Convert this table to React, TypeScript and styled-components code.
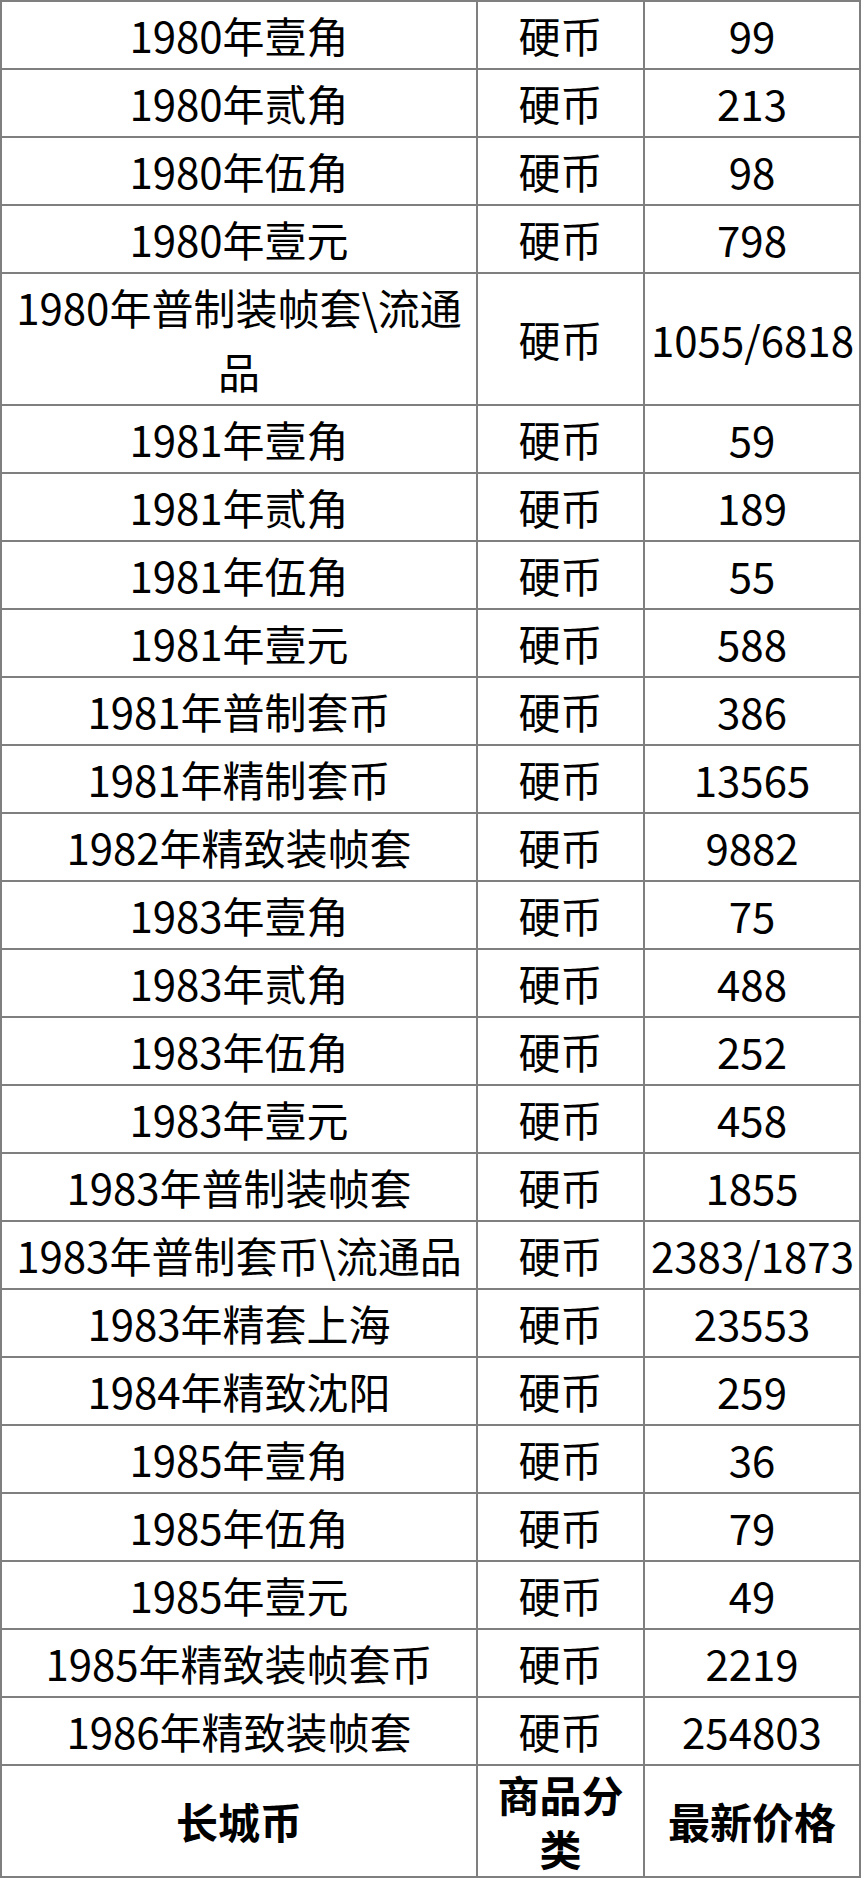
import React from "react";
import styled, { createGlobalStyle } from "styled-components";

const GlobalStyle = createGlobalStyle`
  html, body {
    margin: 0;
    padding: 0;
    background: #ffffff;
  }
  body {
    font-family: "Noto Sans CJK SC", "Noto Sans", sans-serif;
    color: #000000;
  }
`;

type Coin = { name: string; kind: string; price: string };

const coins: Coin[] = [
  { name: "1980年壹角", kind: "硬币", price: "99" },
  { name: "1980年贰角", kind: "硬币", price: "213" },
  { name: "1980年伍角", kind: "硬币", price: "98" },
  { name: "1980年壹元", kind: "硬币", price: "798" },
  { name: "1980年普制装帧套\\流通品", kind: "硬币", price: "1055/6818" },
  { name: "1981年壹角", kind: "硬币", price: "59" },
  { name: "1981年贰角", kind: "硬币", price: "189" },
  { name: "1981年伍角", kind: "硬币", price: "55" },
  { name: "1981年壹元", kind: "硬币", price: "588" },
  { name: "1981年普制套币", kind: "硬币", price: "386" },
  { name: "1981年精制套币", kind: "硬币", price: "13565" },
  { name: "1982年精致装帧套", kind: "硬币", price: "9882" },
  { name: "1983年壹角", kind: "硬币", price: "75" },
  { name: "1983年贰角", kind: "硬币", price: "488" },
  { name: "1983年伍角", kind: "硬币", price: "252" },
  { name: "1983年壹元", kind: "硬币", price: "458" },
  { name: "1983年普制装帧套", kind: "硬币", price: "1855" },
  { name: "1983年普制套币\\流通品", kind: "硬币", price: "2383/1873" },
  { name: "1983年精套上海", kind: "硬币", price: "23553" },
  { name: "1984年精致沈阳", kind: "硬币", price: "259" },
  { name: "1985年壹角", kind: "硬币", price: "36" },
  { name: "1985年伍角", kind: "硬币", price: "79" },
  { name: "1985年壹元", kind: "硬币", price: "49" },
  { name: "1985年精致装帧套币", kind: "硬币", price: "2219" },
  { name: "1986年精致装帧套", kind: "硬币", price: "254803" },
];

const Table = styled.table`
  width: 861px;
  table-layout: fixed;
  border-collapse: separate;
  border-spacing: 0;
  border-top: 2px solid #7f7f7f;
  border-left: 2px solid #7f7f7f;
`;

const Col = styled.col<{ $w: number }>`
  width: ${(p) => p.$w}px;
`;

const Cell = styled.td<{ $head?: boolean; $nowrap?: boolean }>`
  padding: 1px 6px;
  border-right: 2px solid #7f7f7f;
  border-bottom: 2px solid #7f7f7f;
  text-align: center;
  vertical-align: middle;
  font-size: 42px;
  line-height: ${(p) => (p.$head ? "54px" : "64px")};
  font-weight: ${(p) => (p.$head ? 700 : 400)};
  white-space: ${(p) => (p.$nowrap ? "nowrap" : "normal")};
  overflow: visible;
`;

const Row = styled.tr`
  height: 68px;
`;

export default function App() {
  return (
    <>
      <GlobalStyle />
      <Table>
        <colgroup>
          <Col $w={476} />
          <Col $w={167} />
          <Col $w={216} />
        </colgroup>
        <tbody>
          {coins.map((c) => (
            <Row key={c.name}>
              <Cell>{c.name}</Cell>
              <Cell>{c.kind}</Cell>
              <Cell $nowrap>{c.price}</Cell>
            </Row>
          ))}
          <Row>
            <Cell $head>长城币</Cell>
            <Cell $head>商品分类</Cell>
            <Cell $head>最新价格</Cell>
          </Row>
        </tbody>
      </Table>
    </>
  );
}
